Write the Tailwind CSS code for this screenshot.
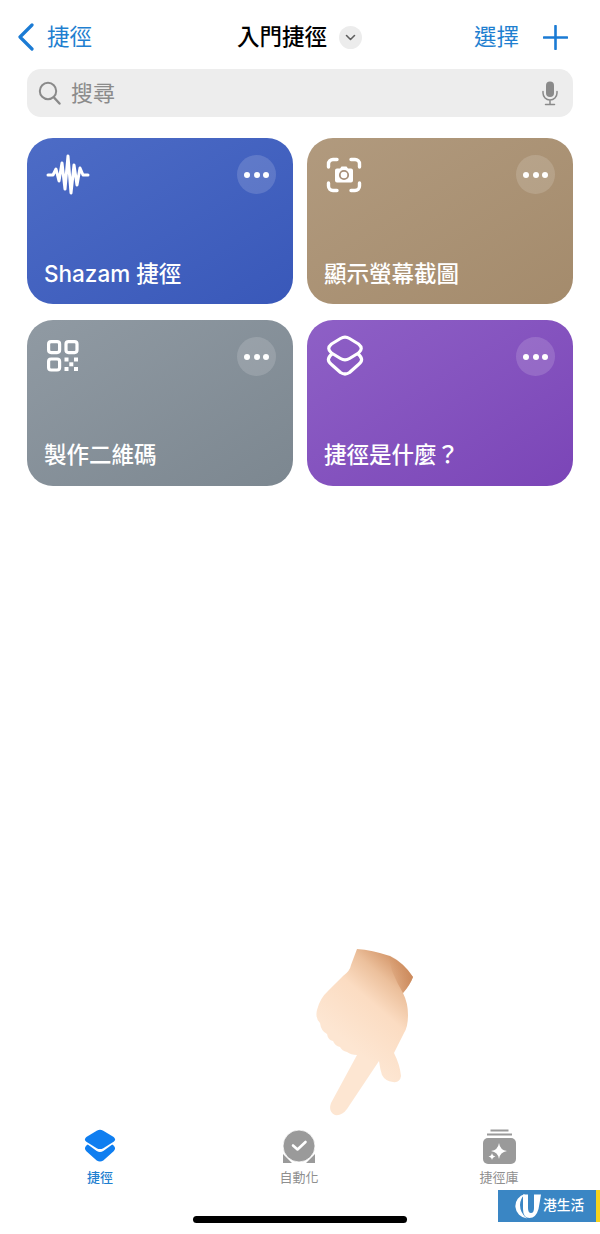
<!DOCTYPE html>
<html lang="zh-Hant">
<head>
<meta charset="utf-8">
<script src="https://cdn.jsdelivr.net/npm/@tailwindcss/browser@4"></script>
</head>
<body class="bg-white">
<div class="relative w-[600px] h-[1234px] overflow-hidden flex flex-col font-['Inter','Noto_Sans_CJK_TC',sans-serif]">
  <!-- nav -->
  <div class="h-[69px] pt-[19px] pl-[17px] pr-[32px]">
    <div class="h-[36px] flex items-center relative">
      <svg class="w-[18px] h-[28px]" viewBox="0 0 18 28" fill="none"><path d="M15 2 L3 14 L15 26" stroke="#1b7bd4" stroke-width="3.2" stroke-linecap="round" stroke-linejoin="round"/></svg>
      <span class="ml-[12px] text-[22.5px] leading-none text-[#1f7fd0]">捷徑</span>
      <div class="absolute left-[220px] top-0 h-[36px] flex items-center">
        <span class="text-[22.5px] leading-none font-medium text-black">入門捷徑</span>
        <span class="ml-[12px] w-[23px] h-[23px] rounded-full bg-[#ececec] flex items-center justify-center">
          <svg class="w-[11px] h-[7px]" viewBox="0 0 11 7" fill="none"><path d="M1.5 1.5 L5.5 5.5 L9.5 1.5" stroke="#5f5f5f" stroke-width="1.6" stroke-linecap="round" stroke-linejoin="round"/></svg>
        </span>
      </div>
      <span class="ml-auto text-[22.5px] leading-none text-[#1f7fd0]">選擇</span>
      <svg class="ml-[24px] w-[25px] h-[25px]" viewBox="0 0 25 25" fill="none"><path d="M12.5 1 V24 M1 12.5 H24" stroke="#1b7bd4" stroke-width="2.6" stroke-linecap="round"/></svg>
    </div>
  </div>
  <!-- search -->
  <div class="mx-[27px] h-[48px] rounded-[14px] bg-[#ededed] flex items-center pl-[11px] pr-[14px]">
    <svg class="w-[23px] h-[24px]" viewBox="0 0 23 24" fill="none"><circle cx="10" cy="10" r="8.2" stroke="#8a8a8a" stroke-width="2"/><path d="M16 16.5 L21.5 22.5" stroke="#8a8a8a" stroke-width="2.4" stroke-linecap="round"/></svg>
    <span class="ml-[10px] text-[22px] leading-none text-[#8b8b8b]">搜尋</span>
    <svg class="ml-auto w-[18px] h-[25px]" viewBox="0 0 18 25" fill="none"><rect x="5" y="0.5" width="8" height="15.5" rx="4" fill="#8a8a8a"/><path d="M2 10.5 V12 A7 7 0 0 0 16 12 V10.5 M9 19 V23.5 M4.5 23.5 H13.5" stroke="#8a8a8a" stroke-width="1.5" stroke-linecap="round"/></svg>
  </div>
  <!-- cards -->
  <div class="mt-[21px] mx-[27px] grid grid-cols-[266px_266px] gap-x-[14px] gap-y-[16px]">
    <div class="relative h-[166px] rounded-[26px] bg-gradient-to-br from-[#4d6cc6] to-[#3958b9]">
      <svg class="absolute left-[19px] top-[16px] w-[44px] h-[42px]" viewBox="0 0 44 42" fill="none" stroke="#fff" stroke-width="3" stroke-linecap="round" stroke-linejoin="round"><path d="M2 21 H7 L10 15 L13 27 L16 9 L19 35 L22 2 L25 39 L28 11 L31 31 L34 14 L37 21 H42"/></svg>
      <span class="absolute right-[17px] top-[17px] w-[39px] h-[39px] rounded-full bg-white/15 flex items-center justify-center gap-[3.5px]"><i class="w-[6px] h-[6px] rounded-full bg-white"></i><i class="w-[6px] h-[6px] rounded-full bg-white"></i><i class="w-[6px] h-[6px] rounded-full bg-white"></i></span>
      <span class="absolute left-[17px] bottom-[16px] text-[22.5px] leading-[28px] font-medium text-white whitespace-nowrap">Shazam 捷徑</span>
    </div>
    <div class="relative h-[166px] rounded-[26px] bg-gradient-to-br from-[#b19a7e] to-[#a48b6c]">
      <svg class="absolute left-[19px] top-[19px] w-[36px] h-[36px]" viewBox="0 0 36 36" fill="none"><path d="M2.5 10 V7 A4.5 4.5 0 0 1 7 2.5 H11 M25 2.5 H29 A4.5 4.5 0 0 1 33.5 7 V10 M33.5 26 V29 A4.5 4.5 0 0 1 29 33.5 H25 M11 33.5 H7 A4.5 4.5 0 0 1 2.5 29 V26" stroke="#fff" stroke-width="3.4" stroke-linecap="round"/><path d="M9 13.5 a2 2 0 0 1 2 -2 h3 l1.5 -2 h5 l1.5 2 h3 a2 2 0 0 1 2 2 v10 a2 2 0 0 1 -2 2 h-14 a2 2 0 0 1 -2 -2 z" fill="#fff"/><circle cx="18" cy="18" r="4.2" fill="none" stroke="#a8907a" stroke-width="1.8"/></svg>
      <span class="absolute right-[18px] top-[17px] w-[39px] h-[39px] rounded-full bg-white/15 flex items-center justify-center gap-[3.5px]"><i class="w-[6px] h-[6px] rounded-full bg-white"></i><i class="w-[6px] h-[6px] rounded-full bg-white"></i><i class="w-[6px] h-[6px] rounded-full bg-white"></i></span>
      <span class="absolute left-[17px] bottom-[16px] text-[22.5px] leading-[28px] font-medium text-white whitespace-nowrap">顯示螢幕截圖</span>
    </div>
    <div class="relative h-[166px] rounded-[26px] bg-gradient-to-br from-[#909aa3] to-[#7c8790]">
      <svg class="absolute left-[20px] top-[20px] w-[32px] h-[32px]" viewBox="0 0 32 32" fill="none"><g stroke="#fff" stroke-width="3.2"><rect x="1.6" y="1.6" width="11" height="11" rx="2.5"/><rect x="19" y="1.6" width="11" height="11" rx="2.5"/><rect x="1.6" y="19" width="11" height="11" rx="2.5"/></g><g fill="#fff"><rect x="17.5" y="17.5" width="4" height="4"/><rect x="27" y="17.5" width="4" height="4"/><rect x="22.3" y="22.3" width="4" height="4"/><rect x="17.5" y="27" width="4" height="4"/><rect x="27" y="27" width="4" height="4"/></g></svg>
      <span class="absolute right-[17px] top-[17px] w-[39px] h-[39px] rounded-full bg-white/15 flex items-center justify-center gap-[3.5px]"><i class="w-[6px] h-[6px] rounded-full bg-white"></i><i class="w-[6px] h-[6px] rounded-full bg-white"></i><i class="w-[6px] h-[6px] rounded-full bg-white"></i></span>
      <span class="absolute left-[17px] bottom-[17px] text-[22.5px] leading-[28px] font-medium text-white whitespace-nowrap">製作二維碼</span>
    </div>
    <div class="relative h-[166px] rounded-[26px] bg-gradient-to-br from-[#8e60c6] to-[#7b45b7]">
      <svg class="absolute left-[19px] top-[15px] w-[38px] h-[42px]" viewBox="0 0 38 42" fill="none" stroke="#fff" stroke-width="3.2" stroke-linejoin="round" stroke-linecap="round"><path d="M14.5 3.5 Q19 0.8 23.5 3.5 L32.5 9 Q38 13.5 32.5 18 L23.5 23.5 Q19 26.2 14.5 23.5 L5.5 18 Q0 13.5 5.5 9 Z"/><path d="M6 19 Q-1 24.5 5.5 29.5 L14.5 37.5 Q19 40.5 23.5 37.5 L32.5 29.5 Q39 24.5 32 19"/></svg>
      <span class="absolute right-[18px] top-[17px] w-[39px] h-[39px] rounded-full bg-white/15 flex items-center justify-center gap-[3.5px]"><i class="w-[6px] h-[6px] rounded-full bg-white"></i><i class="w-[6px] h-[6px] rounded-full bg-white"></i><i class="w-[6px] h-[6px] rounded-full bg-white"></i></span>
      <span class="absolute left-[17px] bottom-[17px] text-[22.5px] leading-[28px] font-medium text-white whitespace-nowrap">捷徑是什麼？</span>
    </div>
  </div>
  <div class="flex-1"></div>
  <!-- hand illustration -->
  <svg class="absolute left-[300px] top-[935px] w-[130px] h-[190px]" viewBox="0 0 130 190">
    <defs>
      <linearGradient id="h1" x1="0.72" y1="0.02" x2="0.42" y2="0.62"><stop offset="0" stop-color="#d69a6e"/><stop offset="0.22" stop-color="#ecc09c"/><stop offset="0.5" stop-color="#fbdcc2"/><stop offset="1" stop-color="#fde6d2"/></linearGradient>
      <linearGradient id="h3" x1="0" y1="0" x2="1" y2="0.3"><stop offset="0" stop-color="#cf8f62" stop-opacity="0"/><stop offset="1" stop-color="#c98658" stop-opacity="0.75"/></linearGradient>
    </defs>
    <path d="M57 14 Q72 15 90 21 Q104 28 113 42 Q110 50 103 58 Q108 68 108 80 Q108 92 104 98 Q98 110 94 118 Q100 130 101 141 Q100 148 93 147 Q85 146 82 140 Q80 134 79 126 L47 174 Q42 181 35 180 Q28 177 31 168 L57 120 Q51 120 47 117 Q42 116 40 112 Q35 111 33 106 Q28 105 27 99 Q21 96 20 88 Q15 83 17 75 Q20 63 28 56 Q36 48 43 41 Q50 36 51 30 Q54 22 57 14 Z" fill="url(#h1)"/>
    <path d="M88 19 Q104 28 113 42 Q110 50 103 58 Q97 48 92 36 Z" fill="url(#h3)"/>
  </svg>
  <!-- tab bar -->
  <div class="h-[62px] flex relative">
    <div class="absolute left-[84px] top-[5px] w-[32px] flex flex-col items-center">
      <svg class="w-[32px] h-[36px]" viewBox="0 0 34 37"><path d="M13.5 2.3 Q17 0.3 20.5 2.3 L31.5 9 Q34.5 11.5 31.5 14 L20.5 20.8 Q17 22.8 13.5 20.8 L2.5 14 Q-0.5 11.5 2.5 9 Z" fill="#0f7ef0"/><path d="M4 17 L13.5 23.8 Q17 25.8 20.5 23.8 L30 17 L31.5 18 Q34.5 21 31.5 24 L20.5 33.8 Q17 36 13.5 33.8 L2.5 24 Q-0.5 21 2.5 18 Z" fill="#0f7ef0"/></svg>
      <span class="mt-[5px] text-[13px] leading-[16px] font-medium text-[#1f7fd0] whitespace-nowrap">捷徑</span>
    </div>
    <div class="absolute left-[279px] top-[7px] w-[40px] flex flex-col items-center">
      <svg class="w-[32px] h-[33px]" viewBox="0 0 32 33"><path d="M0 33 V24 L9 33 Z M32 33 V24 L23 33 Z" fill="#9a9a9a"/><circle cx="16" cy="16" r="16" fill="#9a9a9a" stroke="#fff" stroke-width="0.8"/><path d="M10 15.5 L14.5 19.5 L22.5 12" fill="none" stroke="#fff" stroke-width="2.6" stroke-linecap="round" stroke-linejoin="round"/></svg>
      <span class="mt-[6px] text-[13px] leading-[16px] text-[#8f8f8f] whitespace-nowrap">自動化</span>
    </div>
    <div class="absolute left-[479px] top-[5px] w-[40px] flex flex-col items-center">
      <svg class="w-[33px] h-[36px]" viewBox="0 0 33 36"><rect x="7.5" y="1.5" width="18" height="2" fill="#9a9a9a"/><rect x="4" y="5.5" width="25" height="2" fill="#9a9a9a"/><rect y="10" width="33" height="26" rx="5" fill="#9a9a9a"/><path d="M16 15 Q17 22 24 23 Q17 24 16 31 Q15 24 8 23 Q15 22 16 15 Z" fill="#fff"/><path d="M9 25 Q9.5 28 12.5 28.5 Q9.5 29 9 32 Q8.5 29 5.5 28.5 Q8.5 28 9 25 Z" fill="#fff"/></svg>
      <span class="mt-[5px] text-[13px] leading-[16px] text-[#8f8f8f] whitespace-nowrap">捷徑庫</span>
    </div>
  </div>
  <!-- home indicator area -->
  <div class="h-[49px] relative">
    <div class="absolute left-[193px] top-[31px] w-[214px] h-[7px] rounded-full bg-black"></div>
    <div class="absolute left-[498px] top-[5px] w-[102px] h-[32px] flex bg-[#3a86c4] items-center">
      <span class="w-[98px] h-full flex items-center pl-[17px]">
        <svg class="w-[27px] h-[26px] shrink-0" viewBox="0 0 27 26"><path d="M10 1 A13 12.5 0 0 0 12 25.5 Q5 20 5 12 Q5 6 10 1 Z" fill="#fff"/><path d="M8 1.5 H13 V15 Q13 20 16 20 Q19 20 19 15 V1.5 H26 Q25 8 23.5 16 Q21 25 14.5 25 Q8 25 8 16 Z" fill="#fff"/></svg>
        <span class="ml-[1px] text-[13.7px] leading-none font-medium text-white whitespace-nowrap">港生活</span>
      </span>
      <span class="w-[4px] h-full bg-[#f6d31c]"></span>
    </div>
  </div>
</div>
</body>
</html>
